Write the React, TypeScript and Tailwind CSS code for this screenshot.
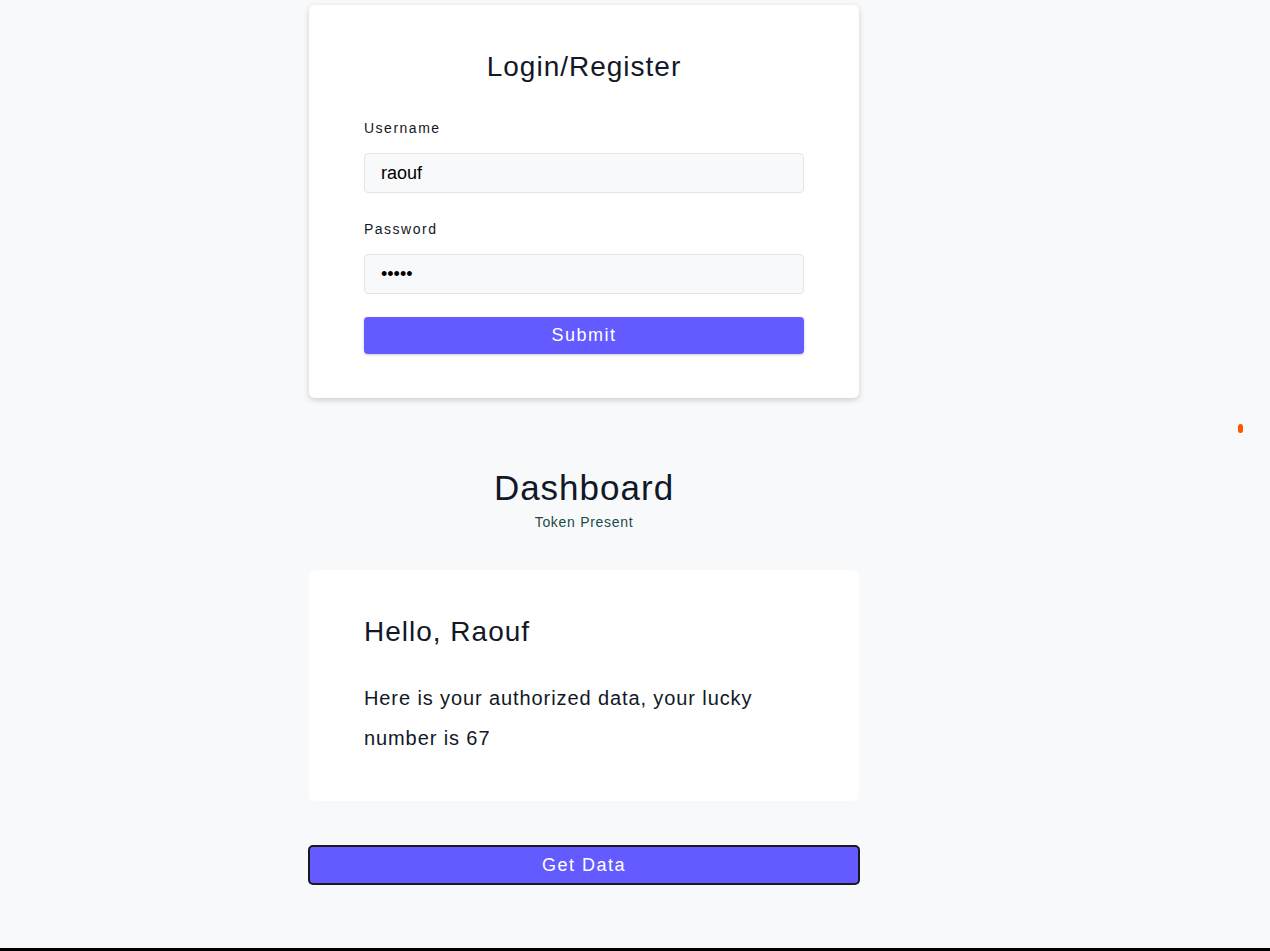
import React from 'react';

export default function App() {
  return (
    <div
      className="relative min-h-[951px] bg-[#f8f9fb] border-b-[3px] border-black tracking-[0.9px]"
      style={{ fontFamily: '"Liberation Sans", Arial, sans-serif' }}
    >
      <div className="ml-[309px] w-[550px] pt-[5px]">
        {/* login card */}
        <div className="bg-white rounded-md shadow-[0_2px_6px_rgba(0,0,0,0.18)] px-[55px] pt-[42px] pb-[44px]">
          <h1 className="text-center text-[28px] leading-[40px] tracking-[1px] text-[#111827]">
            Login/Register
          </h1>
          <form className="mt-[33px]" onSubmit={(e) => e.preventDefault()}>
            <label className="block text-[14px] leading-[16px] tracking-[1.5px] text-[#111827]">Username</label>
            <input
              defaultValue="raouf"
              className="mt-[17px] block w-full h-[40px] px-[16px] bg-[#f8f9fa] border border-[#e2e6ea] rounded-[4px] text-[18px] tracking-normal text-black outline-none"
            />
            <label className="block mt-[28px] text-[14px] leading-[16px] tracking-[1.5px] text-[#111827]">Password</label>
            <input
              type="password"
              defaultValue="raouf"
              className="mt-[17px] block w-full h-[40px] px-[16px] bg-[#f8f9fa] border border-[#e2e6ea] rounded-[4px] text-[18px] tracking-normal text-black outline-none"
            />
            <button className="mt-[23px] block w-full h-[37px] bg-[#635bff] rounded-[4px] text-white text-[18px] tracking-[1.5px] shadow-[0_1px_3px_rgba(0,0,0,0.2)]">
              Submit
            </button>
          </form>
        </div>

        {/* dashboard */}
        <div className="mt-[68px] text-center">
          <h2 className="text-[35px] leading-[44px] tracking-[1px] text-[#111827]">Dashboard</h2>
          <p className="mt-[3px] text-[14px] leading-[18px] tracking-[0.7px] text-[#1d4a45]">Token Present</p>
        </div>

        <div className="mt-[39px] bg-white rounded-md px-[55px] pt-[44px] pb-[43px]">
          <h3 className="text-[28px] leading-[36px] tracking-[1px] text-[#111827]">Hello, Raouf</h3>
          <p className="mt-[28px] text-[20px] leading-[40px] text-[#111827]">
            Here is your authorized data, your lucky number is 67
          </p>
        </div>

        <button className="mt-[44px] block -ml-[1px] w-[552px] h-[40px] bg-[#635bff] border-2 border-[#1a1a1a] rounded-[5px] text-white text-[18px] tracking-[1.5px]">
          Get Data
        </button>
      </div>

      <div className="absolute left-[1238px] top-[424px] w-[5px] h-[9px] rounded-full bg-[#ff5500]" />
    </div>
  );
}
